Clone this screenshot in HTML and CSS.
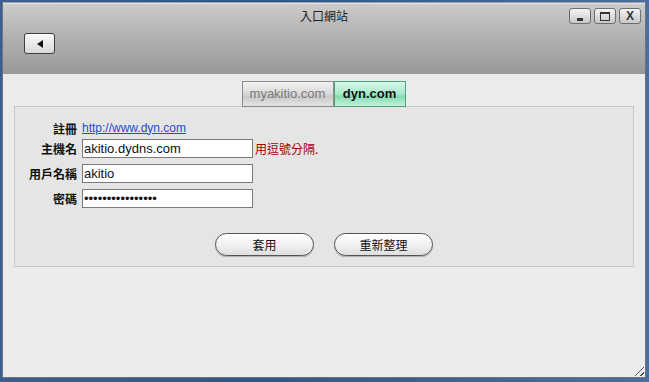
FILE: index.html
```html
<!DOCTYPE html>
<html lang="zh-TW">
<head>
  <meta charset="UTF-8" />
  <title>入口網站</title>
  <link rel="stylesheet" href="styles.css">
</head>
<body>
  <div class="window">
    <div class="titlebar">
      <div class="title">入口網站</div>
      <div class="win-btns">
        <span class="win-btn"><i class="ico-min"></i></span>
        <span class="win-btn"><i class="ico-max"></i></span>
        <span class="win-btn ico-close">X</span>
      </div>
      <button class="back-btn" type="button">
        <svg width="10" height="10" viewBox="0 0 10 10"><path d="M8 1 L8 9 L2 5 Z" fill="#111"/></svg>
      </button>
    </div>

    <div class="body">
      <div class="tabs">
        <span class="tab">myakitio.com</span>
        <span class="tab active">dyn.com</span>
      </div>

      <div class="panel">
        <div class="form">
          <label>註冊</label>
          <a class="link" href="#">http://www.dyn.com</a>

          <label>主機名</label>
          <div class="field"><input type="text" value="akitio.dydns.com"><span class="hint">用逗號分隔.</span></div>

          <label>用戶名稱</label>
          <div class="field"><input type="text" value="akitio"></div>

          <label>密碼</label>
          <div class="field"><input type="password" value="abcdefghijklmnop"></div>
        </div>

        <div class="actions">
          <button class="pill" type="button">套用</button>
          <button class="pill" type="button">重新整理</button>
        </div>
      </div>
    </div>
    <div class="grip"></div>
  </div>
</body>
</html>
```

FILE: styles.css
```css
* {
  margin: 0;
  padding: 0;
  box-sizing: border-box;
}

html, body {
  width: 649px;
  height: 382px;
  overflow: hidden;
}

body {
  font-family: Arial, "Liberation Sans", "Noto Sans CJK TC", sans-serif;
  background: linear-gradient(90deg, #3a5f8e, #2f5688 40%, #4a6f9c);
  padding: 2px 3px 4px 2px;
}

.window {
  position: relative;
  height: 376px;
  border: 1px solid #6b7280;
  border-top-color: #9aa3ad;
  background-color: #ebebeb;
  display: flex;
  flex-direction: column;
}

.titlebar {
  position: relative;
  height: 71px;
  background: linear-gradient(#cbcbcb, #b2b2b2 45%, #999 100%);
  border-top: 1px solid #e2e2e2;
}

.title {
  text-align: center;
  font-family: "Noto Sans CJK TC", sans-serif;
  font-size: 12px;
  color: #222;
  padding-top: 3px;
  line-height: 18px;
}

.win-btns {
  position: absolute;
  top: 4px;
  right: 4px;
  display: flex;
  gap: 3px;
}

.win-btn {
  width: 22px;
  height: 16px;
  border: 1px solid #6f6f6f;
  border-radius: 3px;
  background: linear-gradient(#f4f4f4, #c8c8c8);
  display: flex;
  justify-content: center;
  align-items: center;
  font-size: 12px;
  font-weight: bold;
  color: #333;
}

.ico-min {
  width: 6px;
  height: 3px;
  background-color: #333;
  margin-top: 7px;
}

.ico-max {
  width: 10px;
  height: 9px;
  border: 1px solid #333;
  border-top-width: 2px;
}

.back-btn {
  position: absolute;
  left: 21px;
  top: 29px;
  width: 31px;
  height: 21px;
  border: 1px solid #3e3e3e;
  border-radius: 3px;
  background: linear-gradient(#fafafa, #d9d9d9);
  display: flex;
  justify-content: center;
  align-items: center;
}

.body {
  flex: 1;
  padding: 7px 11px 0 11px;
}

.tabs {
  display: flex;
  justify-content: center;
  margin-left: -1px;
}

.tab {
  height: 26px;
  width: 92px;
  font-size: 13px;
  line-height: 24px;
  text-align: center;
  color: #7a7a7a;
  border: 1px solid #8a8a8a;
  background: linear-gradient(#f2f2f2, #d8d8d8 50%, #c9c9c9 60%, #e4e4e4);
}

.tab.active {
  width: 72px;
  border-color: #4aa37c;
  color: #111;
  font-weight: bold;
  font-size: 13px;
  background: linear-gradient(#d9f7ea, #a7e8c9 50%, #83dcb2 60%, #c4f1dc);
}

.panel {
  margin-top: -1px;
  height: 161px;
  background-color: #e5e5e5;
  border: 1px solid #c9c9c9;
  padding: 13px 0 0 0;
}

.form {
  display: grid;
  grid-template-columns: 62px 1fr;
  grid-template-rows: 13px repeat(3, 19px);
  column-gap: 5px;
  row-gap: 6px;
  align-items: center;
}

.form > :nth-child(-n+2) {
  margin-top: 3px;
}

label {
  font-family: "Noto Sans CJK TC", sans-serif;
  font-weight: bold;
  font-size: 12px;
  text-align: right;
  color: #111;
  line-height: 15px;
}

.link {
  font-size: 12px;
  color: #1a4fd6;
  line-height: 15px;
}

.field {
  display: flex;
  align-items: center;
}

input {
  width: 171px;
  height: 19px;
  border: 1px solid #7a7a7a;
  background-color: #fff;
  font-family: Arial, "Liberation Sans", sans-serif;
  font-size: 13px;
  padding: 0 1px;
  color: #111;
}

.hint {
  font-family: "Noto Sans CJK TC", sans-serif;
  font-size: 12px;
  color: #a00000;
  margin-left: 2px;
}

.actions {
  display: flex;
  justify-content: center;
  gap: 20px;
  margin-top: 25px;
}

.pill {
  width: 99px;
  height: 23px;
  border: 1px solid #555;
  border-radius: 12px;
  background: linear-gradient(#ffffff, #f2f2f2 50%, #dedede);
  font-family: "Noto Sans CJK TC", sans-serif;
  font-size: 12px;
  color: #111;
  box-shadow: 0 1px 1px rgba(0, 0, 0, 0.25);
}

.grip {
  position: absolute;
  right: 1px;
  bottom: 1px;
  width: 12px;
  height: 12px;
  background: repeating-linear-gradient(135deg, transparent 0 2px, #555 2px 3px, transparent 3px 4px);
  clip-path: polygon(100% 0, 100% 100%, 0 100%);
}
```
